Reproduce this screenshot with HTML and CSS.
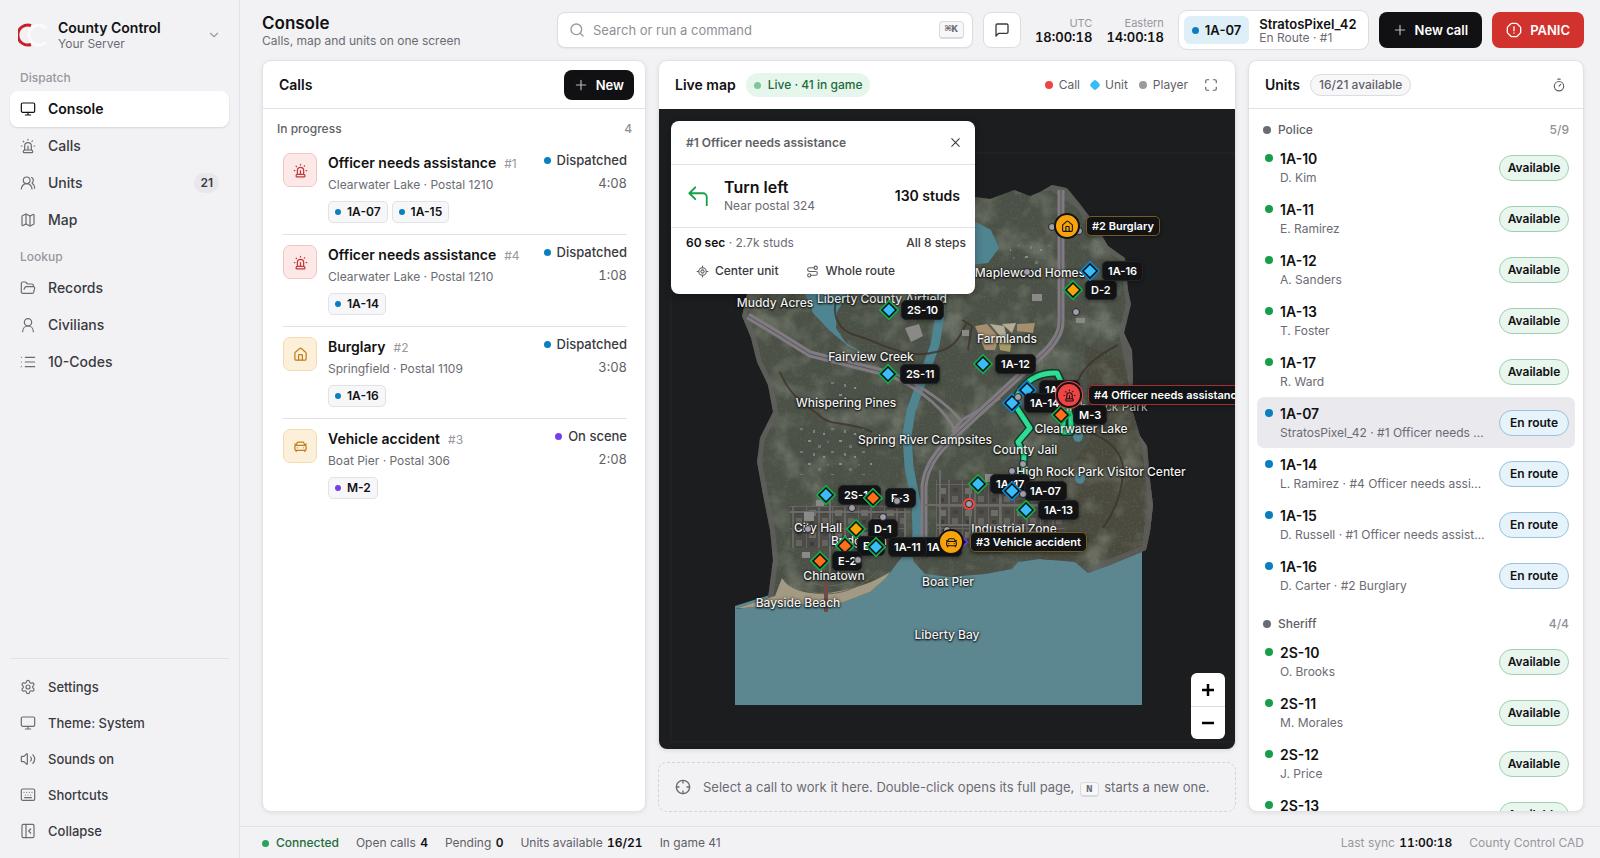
FILE: index.html
```html
<!DOCTYPE html>
<html lang="en">
<head>
    <meta charset="UTF-8">
    <meta name="viewport" content="width=device-width, initial-scale=1.0">
    <title>Console - County Control</title>
    <link rel="stylesheet" href="styles.css">
</head>
<body>
    <!-- Icon sprite -->
    <svg class="sprite" aria-hidden="true">
        <symbol id="i-monitor" viewBox="0 0 24 24"><rect x="2" y="3" width="20" height="14" rx="2"/><path d="M8 21h8M12 17v4"/></symbol>
        <symbol id="i-siren" viewBox="0 0 24 24"><path d="M7 18v-6a5 5 0 1 1 10 0v6"/><path d="M5 21a1 1 0 0 0 1 1h12a1 1 0 0 0 1-1v-1a2 2 0 0 0-2-2H7a2 2 0 0 0-2 2z"/><path d="M21 12h1M18.5 4.5 18 5M2 12h1M12 2v1M4.929 4.929l.707.707M12 12v6"/></symbol>
        <symbol id="i-users" viewBox="0 0 24 24"><path d="M18 21a8 8 0 0 0-16 0"/><circle cx="10" cy="8" r="5"/><path d="M22 20c0-3.370-2-6.500-4-8a5 5 0 0 0-.450-8.300"/></symbol>
        <symbol id="i-map" viewBox="0 0 24 24"><path d="M14.106 5.553a2 2 0 0 0 1.788 0l3.659-1.830A1 1 0 0 1 21 4.619v12.764a1 1 0 0 1-.553.894l-4.553 2.277a2 2 0 0 1-1.788 0l-4.212-2.106a2 2 0 0 0-1.788 0l-3.659 1.830A1 1 0 0 1 3 19.381V6.618a1 1 0 0 1 .553-.894l4.553-2.277a2 2 0 0 1 1.788 0z"/><path d="M15 5.764v15M9 3.236v15"/></symbol>
        <symbol id="i-folder" viewBox="0 0 24 24"><path d="m6 14 1.500-2.900A2 2 0 0 1 9.240 10H20a2 2 0 0 1 1.940 2.500l-1.540 6a2 2 0 0 1-1.950 1.500H4a2 2 0 0 1-2-2V5a2 2 0 0 1 2-2h3.900a2 2 0 0 1 1.690.900l.810 1.200a2 2 0 0 0 1.670.900H18a2 2 0 0 1 2 2v2"/></symbol>
        <symbol id="i-user" viewBox="0 0 24 24"><circle cx="12" cy="8" r="5.500"/><path d="M4 22c0-5 3.500-8.500 8-8.500s8 3.500 8 8.500"/></symbol>
        <symbol id="i-list" viewBox="0 0 24 24"><path d="M8 5h14M8 12h14M8 19h14M2 5h.010M2 12h.010M2 19h.010"/></symbol>
        <symbol id="i-gear" viewBox="0 0 24 24"><path d="M9.671 4.136a2.340 2.340 0 0 1 4.659 0 2.340 2.340 0 0 0 3.319 1.915 2.340 2.340 0 0 1 2.330 4.033 2.340 2.340 0 0 0 0 3.831 2.340 2.340 0 0 1-2.330 4.033 2.340 2.340 0 0 0-3.319 1.915 2.340 2.340 0 0 1-4.659 0 2.340 2.340 0 0 0-3.320-1.915 2.340 2.340 0 0 1-2.330-4.033 2.340 2.340 0 0 0 0-3.831A2.340 2.340 0 0 1 6.350 6.051a2.340 2.340 0 0 0 3.319-1.915"/><circle cx="12" cy="12" r="3"/></symbol>
        <symbol id="i-sound" viewBox="0 0 24 24"><path d="M11 4.700a.700.700 0 0 0-1.200-.500L6.400 7.600A1.400 1.400 0 0 1 5.400 8H3a1 1 0 0 0-1 1v6a1 1 0 0 0 1 1h2.400a1.400 1.400 0 0 1 1 .400l3.400 3.400a.700.700 0 0 0 1.200-.500zM16 9a5 5 0 0 1 0 6M19.400 18.400a9 9 0 0 0 0-12.700"/></symbol>
        <symbol id="i-keyboard" viewBox="0 0 24 24"><rect x="2" y="3" width="20" height="17" rx="2"/><path d="M6 8h.010M10 8h.010M14 8h.010M18 8h.010M8 12h.010M12 12h.010M16 12h.010M7 16h10"/></symbol>
        <symbol id="i-collapse" viewBox="0 0 24 24"><rect x="3" y="2" width="18" height="20" rx="2"/><path d="M9 2v20M16 9l-3 3 3 3"/></symbol>
        <symbol id="i-chevron" viewBox="0 0 24 24"><path d="m6 9 6 6 6-6"/></symbol>
        <symbol id="i-search" viewBox="0 0 24 24"><circle cx="11" cy="11" r="8"/><path d="m21 21-4.300-4.300"/></symbol>
        <symbol id="i-message" viewBox="0 0 24 24"><path d="M21 15a2 2 0 0 1-2 2H7l-4 4V5a2 2 0 0 1 2-2h14a2 2 0 0 1 2 2z"/></symbol>
        <symbol id="i-plus" viewBox="0 0 24 24"><path d="M4 12h16M12 4v16"/></symbol>
        <symbol id="i-alert" viewBox="0 0 24 24"><path d="M15.300 2a2 2 0 0 1 1.400.600l4.700 4.700a2 2 0 0 1 .600 1.400v6.600a2 2 0 0 1-.600 1.400l-4.700 4.700a2 2 0 0 1-1.400.600H8.700a2 2 0 0 1-1.400-.600l-4.700-4.700A2 2 0 0 1 2 15.300V8.700a2 2 0 0 1 .600-1.400l4.700-4.700A2 2 0 0 1 8.700 2zM12 7v6M12 16.500h.010"/></symbol>
        <symbol id="i-expand" viewBox="0 0 24 24"><path d="M8 3H5a2 2 0 0 0-2 2v3M21 8V5a2 2 0 0 0-2-2h-3M3 16v3a2 2 0 0 0 2 2h3M16 21h3a2 2 0 0 0 2-2v-3"/></symbol>
        <symbol id="i-timer" viewBox="0 0 24 24"><path d="M10 2h4M12 14l3-3"/><circle cx="12" cy="14" r="8"/></symbol>
        <symbol id="i-house" viewBox="0 0 24 24"><path d="M15 21v-8a1 1 0 0 0-1-1h-4a1 1 0 0 0-1 1v8"/><path d="M3 10a2 2 0 0 1 .709-1.528l7-6a2 2 0 0 1 2.582 0l7 6A2 2 0 0 1 21 10v9a2 2 0 0 1-2 2H5a2 2 0 0 1-2-2z"/></symbol>
        <symbol id="i-car" viewBox="0 0 24 24"><path d="m21 8-2 2-1.500-3.700A2 2 0 0 0 15.646 5H8.400a2 2 0 0 0-1.903 1.257L5 10 3 8M7 14h.010M17 14h.010"/><rect x="3" y="10" width="18" height="8" rx="2"/><path d="M5 18v2M19 18v2"/></symbol>
        <symbol id="i-close" viewBox="0 0 24 24"><path d="M19 5 5 19M5 5l14 14"/></symbol>
        <symbol id="i-left" viewBox="0 0 24 24"><path d="M21 22v-9a4 4 0 0 0-4-4H3M8.500 2.500 2 9l6.500 6.500"/></symbol>
        <symbol id="i-locate" viewBox="0 0 24 24"><path d="M2 12h3M19 12h3M12 2v3M12 19v3"/><circle cx="12" cy="12" r="7"/><circle cx="12" cy="12" r="3"/></symbol>
        <symbol id="i-route" viewBox="0 0 24 24"><circle cx="6" cy="19" r="3"/><path d="M9 19h8.500a3.500 3.500 0 0 0 0-7h-11a3.500 3.500 0 0 1 0-7H15"/><circle cx="18" cy="5" r="3"/></symbol>
        <symbol id="i-crosshair" viewBox="0 0 24 24"><circle cx="12" cy="12" r="10"/><path d="M22 12h-4M6 12H2M12 6V2M12 22v-4"/></symbol>
    </svg>

    <div class="app">
        <aside class="sidebar">
            <button class="brand" type="button">
                <svg class="brand-logo" viewBox="0 0 30 24" aria-hidden="true">
                    <path class="logo-red" d="M13 2.500A10 10 0 1 0 13 21.500"/>
                    <path class="logo-white" d="M28 5A10 10 0 1 0 28 19"/>
                </svg>
                <span class="brand-text"><strong>County Control</strong><small>Your Server</small></span>
                <svg class="icon chevron"><use href="#i-chevron"/></svg>
            </button>

            <nav class="nav">
                <h2 class="nav-label">Dispatch</h2>
                <a class="nav-item active" href="#console"><svg class="icon"><use href="#i-monitor"/></svg>Console</a>
                <a class="nav-item" href="#calls"><svg class="icon"><use href="#i-siren"/></svg>Calls</a>
                <a class="nav-item" href="#units"><svg class="icon"><use href="#i-users"/></svg>Units<span class="count">21</span></a>
                <a class="nav-item" href="#map"><svg class="icon"><use href="#i-map"/></svg>Map</a>
                <h2 class="nav-label">Lookup</h2>
                <a class="nav-item" href="#records"><svg class="icon"><use href="#i-folder"/></svg>Records</a>
                <a class="nav-item" href="#civilians"><svg class="icon"><use href="#i-user"/></svg>Civilians</a>
                <a class="nav-item" href="#codes"><svg class="icon"><use href="#i-list"/></svg>10-Codes</a>
            </nav>

            <div class="nav nav-bottom">
                <a class="nav-item" href="#settings"><svg class="icon"><use href="#i-gear"/></svg>Settings</a>
                <button class="nav-item" type="button"><svg class="icon"><use href="#i-monitor"/></svg>Theme: System</button>
                <button class="nav-item" type="button"><svg class="icon"><use href="#i-sound"/></svg>Sounds on</button>
                <button class="nav-item" type="button"><svg class="icon"><use href="#i-keyboard"/></svg>Shortcuts</button>
                <button class="nav-item" type="button"><svg class="icon"><use href="#i-collapse"/></svg>Collapse</button>
            </div>
        </aside>

        <div class="page">
            <header class="topbar">
                <div class="heading">
                    <h1>Console</h1>
                    <p>Calls, map and units on one screen</p>
                </div>
                <label class="search">
                    <svg class="icon"><use href="#i-search"/></svg>
                    <input type="text" placeholder="Search or run a command" aria-label="Search or run a command">
                    <kbd>⌘K</kbd>
                </label>
                <button class="btn btn-icon" type="button" aria-label="Messages"><svg class="icon"><use href="#i-message"/></svg></button>
                <div class="clocks">
                    <div class="clock"><span>UTC</span><time>18:00:18</time></div>
                    <div class="clock"><span>Eastern</span><time>14:00:18</time></div>
                </div>
                <button class="me" type="button">
                    <span class="me-unit"><i class="dot blue"></i>1A-07</span>
                    <span class="me-text"><strong>StratosPixel_42</strong><small>En Route · #1</small></span>
                </button>
                <button class="btn btn-dark" type="button"><svg class="icon"><use href="#i-plus"/></svg>New call</button>
                <button class="btn btn-panic" type="button"><svg class="icon"><use href="#i-alert"/></svg>PANIC</button>
            </header>

            <main class="board">
                <section class="card">
                    <div class="card-head">
                        <h2>Calls</h2>
                        <button class="btn btn-dark btn-small" type="button"><svg class="icon"><use href="#i-plus"/></svg>New</button>
                    </div>
                    <div class="group-head"><h3>In progress</h3><span>4</span></div>
                    <ul class="calls" id="callsList"></ul>
                </section>

                <div class="center">
                    <section class="card map-card">
                        <div class="card-head">
                            <h2>Live map</h2>
                            <span class="live"><i class="dot"></i>Live · 41 in game</span>
                            <div class="legend">
                                <span><i class="dot red"></i>Call</span>
                                <span><i class="gem"></i>Unit</span>
                                <span><i class="dot grey"></i>Player</span>
                            </div>
                            <button class="plain" type="button" aria-label="Full screen"><svg class="icon"><use href="#i-expand"/></svg></button>
                        </div>
                        <div class="map">
                            <div class="world" id="world">
                                <svg class="terrain" viewBox="659 109 576 640" aria-hidden="true">
                                    <defs>
                                        <filter id="grain" x="0" y="0" width="100%" height="100%">
                                            <feTurbulence type="fractalNoise" baseFrequency="0.5" numOctaves="2" seed="4" result="n"/>
                                            <feColorMatrix in="n" type="matrix" values="0 0 0 0 0.10  0 0 0 0 0.12  0 0 0 0 0.09  3 0 0 0 -1.65"/>
                                            <feComposite in2="SourceGraphic" operator="in"/>
                                        </filter>
                                        <filter id="patches" x="0" y="0" width="100%" height="100%">
                                            <feTurbulence type="fractalNoise" baseFrequency="0.035" numOctaves="4" seed="9" result="n"/>
                                            <feColorMatrix in="n" type="matrix" values="0 0 0 0 0.40  0 0 0 0 0.43  0 0 0 0 0.36  0 3 0 0 -1.4"/>
                                            <feComposite in2="SourceGraphic" operator="in"/>
                                        </filter>
                                        <pattern id="blocks" width="26" height="22" patternUnits="userSpaceOnUse">
                                            <rect width="26" height="22" fill="#4c4a47"/>
                                            <path d="M0 0h26M0 0v22M13 0v22" stroke="#6c6865" stroke-width="2"/>
                                            <rect x="3" y="4" width="7" height="6" fill="#77736f"/>
                                            <rect x="16" y="12" width="6" height="6" fill="#6a6663"/>
                                            <rect x="4" y="14" width="4" height="4" fill="#3a3936"/>
                                            <rect x="17" y="4" width="5" height="4" fill="#3f3e3b"/>
                                        </pattern>
                                        <pattern id="houses" width="31" height="23" patternUnits="userSpaceOnUse">
                                            <rect x="2" y="3" width="3" height="2" fill="#8a8a86"/>
                                            <rect x="12" y="8" width="3" height="3" fill="#6f746c"/>
                                            <rect x="21" y="4" width="2" height="2" fill="#5c6f78"/>
                                            <rect x="7" y="16" width="2" height="3" fill="#7d7f7a"/>
                                            <rect x="25" y="14" width="3" height="2" fill="#74777a"/>
                                            <rect x="17" y="19" width="2" height="2" fill="#8a8a86"/>
                                        </pattern>
                                        <clipPath id="landClip"><use href="#land"/></clipPath>
                                    </defs>
                                    <path class="grid-line" d="M1300 153H671V742h630"/>
                                    <path class="sea" d="M735 606 880 560 950 548H1142V705H735z"/>
                                    <path id="land" class="land" d="M747 294 780 250 850 210 930 200 975 197 990 199 1014 190 1030 196 1040 192 1052 185 1067 188 1080 204 1095 224 1108 246 1125 258 1128 290 1131 304 1124 333 1132 350 1133 380 1130 402 1140 436 1147 446 1150 480 1153 505 1150 532 1146 550 1110 565 1088 573 1075 562 1040 559 1018 562 1012 569 985 574 950 577 925 574 914 562 910 548 898 562 886 578 870 592 838 604 780 604 735 609 768 598 773 560 770 530 764 500 757 462 760 438 773 412 768 385 757 362 751 338 742 316z"/>
                                    <g clip-path="url(#landClip)">
                                        <path class="park" d="M1085 345 1150 370 1160 560 1040 560 1060 480 1090 440z"/>
                                        <rect x="735" y="185" width="425" height="425" filter="url(#patches)" opacity=".35"/>
                                        <rect x="735" y="185" width="425" height="425" filter="url(#grain)"/>
                                        <path fill="url(#houses)" d="M800 425h72v50h-72zM1010 245h40v20h-40zM830 380h26v18h-26z"/>
                                        <path fill="url(#blocks)" opacity=".8" d="M790 506h116v42H790zM936 480h78v62h-78zM1014 500h50v38h-50z"/>
                                        <path class="coast" d="M747 294 742 316 751 338 757 362 768 385 773 412 760 438 757 462 764 500 770 530 773 560 768 600M1014 190 1052 185 1080 204 1108 246 1125 258 1131 304 1124 333 1133 380 1147 446 1153 505 1146 550 1088 573"/>
                                        <path class="beach" d="M782 578c8 14 30 18 52 14 24-4 40-10 56-20l-14 24-50 12H735l40-12z"/>
                                        <path class="water" d="M800 280 813 313 830 331 848 346 868 356 846 343 836 328 837 312 846 296 850 280zM960 225 976 222 991 230 999 248 988 263 960 266z"/>
                                        <path class="river" d="M940 285v30l-5 30-14 38-10 28-4 24 2 32 7 36 1 30-3 24"/>
                                        <ellipse class="water" cx="1078" cy="436" rx="5" ry="6"/>
                                        <ellipse class="water" cx="1080" cy="478" rx="5" ry="6"/>
                                        <path class="dirt" d="M836 300c-4 18 4 32 22 36 26 8 48 24 78 16 20-4 24-16 30-28M780 372c8 20 20 30 38 42 12 14 30 6 54 18M1118 345c-16 8-34 20-40 36M1085 430c20 8 40 20 38 44s-10 40-20 54M962 320l10 6-4 24"/>
                                        <path class="farm-a" d="m975 326 12-2 12 14-4 12h-10zM1017 324l18-1-2 10-16-2z"/>
                                        <path class="farm-b" d="m990 324 14 2 4 16-8-6zM1002 324l14-1-4 10z"/>
                                        <path class="farm-c" d="m998 338 14 2-2 12-10-2z"/>
                                        <path class="track" d="M795 570c14 20 50 22 74 0"/>
                                        <path class="track" d="M786 574c18 28 66 26 92-4"/>
                                        <g class="roads">
                                            <path class="road road-wide" d="M748 316 778 334 810 354 850 364 890 374"/>
                                            <path class="road-mark" d="M748 316 778 334 810 354 850 364 890 374"/>
                                            <path class="road road-thin" d="M888 370c34 16 60 34 74 52M890 376c34 14 56 36 66 56M1000 398 962 420 952 432"/>
                                            <path class="road road-wide" d="M1061 190V322q0 14-16 30L950 440q-24 22-26 46v58"/>
                                            <path class="road-mark" d="M1061 190V322q0 14-16 30L950 440q-24 22-26 46v58"/>
                                            <path class="road road-street" d="M924 505h116M940 470v74M970 484v60M1000 484v60M936 525h90M790 512h120M830 490v90M905 500v50"/>
                                        </g>
                                        <g class="sheds">
                                            <path d="M1032 294h10v7h-10zM905 328l14-4 4 12-12 6zM1076 318h9v5h-9zM804 512h10v9h-10zM985 474h9v8h-9zM816 500h8v6h-8zM962 330h7v6h-7zM832 538h8v6h-8zM802 552h8v6h-8z"/>
                                        </g>
                                    </g>
                                    <path class="pier" d="M826 582v30"/>
                                    <path class="route-edge" d="M1063 420v12h8v-14l-8-32-6-13q-22-1-35 15l-9 14 17 26-12 14 6 13-1 30"/>
                                    <path class="route" d="M1063 420v12h8v-14l-8-32-6-13q-22-1-35 15l-9 14 17 26-12 14 6 13-1 30"/>
                                </svg>
                            </div>

                            <div class="directions">
                                <div class="dir-head"><h3>#1 Officer needs assistance</h3><button class="plain" type="button" aria-label="Close"><svg class="icon"><use href="#i-close"/></svg></button></div>
                                <div class="dir-step">
                                    <svg class="icon turn"><use href="#i-left"/></svg>
                                    <div><strong>Turn left</strong><p>Near postal 324</p></div>
                                    <b>130 studs</b>
                                </div>
                                <div class="dir-sum"><span><b>60 sec</b> · 2.7k studs</span><button class="plain" type="button">All 8 steps</button></div>
                                <div class="dir-actions">
                                    <button class="plain" type="button"><svg class="icon"><use href="#i-locate"/></svg>Center unit</button>
                                    <button class="plain" type="button"><svg class="icon"><use href="#i-route"/></svg>Whole route</button>
                                </div>
                            </div>

                            <div class="zoom">
                                <button type="button" aria-label="Zoom in"><svg viewBox="0 0 14 14"><path d="M1 7h12M7 1v12"/></svg></button>
                                <button type="button" aria-label="Zoom out"><svg viewBox="0 0 14 14"><path d="M1 7h12"/></svg></button>
                            </div>
                        </div>
                    </section>
                    <div class="hint">
                        <svg class="icon"><use href="#i-crosshair"/></svg>
                        <p>Select a call to work it here. Double-click opens its full page, <kbd>N</kbd> starts a new one.</p>
                    </div>
                </div>

                <section class="card">
                    <div class="card-head">
                        <h2>Units</h2>
                        <span class="pill">16/21 available</span>
                        <button class="plain push" type="button" aria-label="Timers"><svg class="icon"><use href="#i-timer"/></svg></button>
                    </div>
                    <div class="units" id="unitsList"></div>
                </section>
            </main>

            <footer class="status">
                <span class="online"><i class="dot"></i>Connected</span>
                <span>Open calls <b>4</b></span>
                <span>Pending <b>0</b></span>
                <span>Units available <b>16/21</b></span>
                <span>In game 41</span>
                <span class="push faint">Last sync <b>11:00:18</b></span>
                <span class="faint">County Control CAD</span>
            </footer>
        </div>
    </div>

    <script>
        const calls = [
            { id: 1, title: 'Officer needs assistance', place: 'Clearwater Lake · Postal 1210', units: ['1A-07', '1A-15'], status: 'Dispatched', time: '4:08', icon: 'siren', tone: 'danger' },
            { id: 4, title: 'Officer needs assistance', place: 'Clearwater Lake · Postal 1210', units: ['1A-14'], status: 'Dispatched', time: '1:08', icon: 'siren', tone: 'danger' },
            { id: 2, title: 'Burglary', place: 'Springfield · Postal 1109', units: ['1A-16'], status: 'Dispatched', time: '3:08', icon: 'house', tone: 'warn' },
            { id: 3, title: 'Vehicle accident', place: 'Boat Pier · Postal 306', units: ['M-2'], status: 'On scene', time: '2:08', icon: 'car', tone: 'warn' }
        ];

        const departments = [
            { name: 'Police', count: '5/9', units: [
                ['1A-10', 'D. Kim', 'Available'],
                ['1A-11', 'E. Ramirez', 'Available'],
                ['1A-12', 'A. Sanders', 'Available'],
                ['1A-13', 'T. Foster', 'Available'],
                ['1A-17', 'R. Ward', 'Available'],
                ['1A-07', 'StratosPixel_42 · #1 Officer needs assistance', 'En route', 'selected'],
                ['1A-14', 'L. Ramirez · #4 Officer needs assistance', 'En route'],
                ['1A-15', 'D. Russell · #1 Officer needs assistance', 'En route'],
                ['1A-16', 'D. Carter · #2 Burglary', 'En route']
            ] },
            { name: 'Sheriff', count: '4/4', units: [
                ['2S-10', 'O. Brooks', 'Available'],
                ['2S-11', 'M. Morales', 'Available'],
                ['2S-12', 'J. Price', 'Available'],
                ['2S-13', 'K. Hayes', 'Available']
            ] }
        ];

        // Map positions are in world units, the view starts at this corner
        const view = { x: 659, y: 109 };

        const places = [
            ['Muddy Acres', 775, 303], ['Liberty County Airfield', 882, 299], ['Fairview Creek', 871, 357],
            ['Whispering Pines', 846, 403], ['Spring River Campsites', 925, 440], ['Farmlands', 1007, 339],
            ['Maplewood Homes', 1030, 273], ['High Rock Park', 1104, 407, 'dim'], ['Clearwater Lake', 1081, 429],
            ['County Jail', 1025, 450], ['High Rock Park Visitor Center', 1101, 472], ['Industrial Zone', 1014, 529],
            ['City Hall', 818, 528], ['Bridgeton', 859, 541], ['Chinatown', 834, 576], ['Bayside Beach', 798, 603],
            ['Boat Pier', 948, 582], ['Liberty Bay', 947, 635]
        ];

        const markers = [
            ['2S-10', 889, 310, 'police', 'free'], ['2S-11', 888, 374, 'police', 'free'], ['1A-12', 983, 364, 'police', 'free'],
            ['D-2', 1073, 290, 'dot-crew', 'free'], ['1A-16', 1090, 271, 'police', 'busy'],
            ['1A-15', 1027, 390, 'police', 'busy'], ['1A-14', 1012, 403, 'police', 'busy'], ['M-3', 1061, 415, 'fire', 'free'],
            ['1A-17', 978, 484, 'police', 'free'], ['1A-07', 1012, 491, 'police', 'busy'], ['1A-13', 1026, 510, 'police', 'free'],
            ['2S-12', 826, 495, 'police', 'free'], ['F-3', 873, 498, 'fire', 'free'], ['D-1', 856, 529, 'dot-crew', 'free'],
            ['E-1', 845, 546, 'fire', 'free'], ['1A-10', 909, 547, 'police', 'free'], ['1A-11', 876, 547, 'police', 'free'],
            ['E-2', 820, 561, 'fire', 'free'], ['M-2', 958, 542, 'fire', 'scene']
        ];

        const players = [
            [1052, 227], [1079, 231], [1027, 272], [1076, 312], [1018, 397], [1023, 464], [1012, 471], [1023, 494],
            [969, 504, 'wanted'], [852, 508], [883, 517], [897, 501], [808, 529], [858, 560], [947, 530]
        ];

        const incidents = [
            ['#2 Burglary', 1067, 226, 'house', 'warn'],
            ['#4 Officer needs assistance', 1069, 395, 'siren', 'danger'],
            ['#3 Vehicle accident', 951, 542, 'car', 'warn']
        ];

        const icon = name => `<svg class="icon"><use href="#i-${name}"/></svg>`;
        const at = (x, y) => `style="left:${x - view.x}px;top:${y - view.y}px"`;

        document.getElementById('callsList').innerHTML = calls.map(c => {
            const color = c.status === 'On scene' ? 'purple' : 'blue';
            return `<li class="call">
                <span class="call-icon ${c.tone}">${icon(c.icon)}</span>
                <div class="call-main">
                    <h4>${c.title}<span>#${c.id}</span></h4>
                    <p>${c.place}</p>
                    <div class="chips">${c.units.map(u => `<span class="chip"><i class="dot ${color}"></i>${u}</span>`).join('')}</div>
                </div>
                <div class="call-side">
                    <span class="state"><i class="dot ${color}"></i>${c.status}</span>
                    <time>${c.time}</time>
                </div>
            </li>`;
        }).join('');

        document.getElementById('unitsList').innerHTML = departments.map(d => `
            <div class="group-head"><h3><i class="dot slate"></i>${d.name}</h3><span>${d.count}</span></div>
            ${d.units.map(([name, note, status, selected]) => `
                <div class="unit ${selected || ''}">
                    <i class="dot ${status === 'Available' ? 'green' : 'blue'}"></i>
                    <div class="unit-main"><h4>${name}</h4><p>${note}</p></div>
                    <button class="unit-status ${status === 'Available' ? 'is-free' : 'is-busy'}" type="button">${status}</button>
                </div>
            `).join('')}
        `).join('');

        document.getElementById('world').insertAdjacentHTML('beforeend',
            places.map(([name, x, y, dim]) => `<span class="place ${dim || ''}" ${at(x, y)}>${name}</span>`).join('') +
            markers.map(([name, x, y, kind, state]) => `
                <div class="marker" ${at(x, y)}>
                    <svg class="diamond ${kind} ${state}" viewBox="-11 -11 22 22"><path class="ring" d="M0-10 10 0 0 10-10 0z"/><path class="gap" d="M0-8 8 0 0 8-8 0z"/><path class="core" d="M0-6 6 0 0 6-6 0z"/></svg>
                    <span class="tag">${name}</span>
                </div>`).join('') +
            players.map(([x, y, wanted]) => `<i class="player ${wanted || ''}" ${at(x, y)}></i>`).join('') +
            incidents.map(([name, x, y, glyph, tone]) => `
                <div class="marker incident ${tone}" ${at(x, y)}>
                    <span class="bubble">${icon(glyph)}</span>
                    <span class="tag">${name}</span>
                </div>`).join('')
        );
    </script>
</body>
</html>
```
FILE: styles.css
```css
* {
    box-sizing: border-box;
    margin: 0;
    padding: 0;
}
body {
    font-family: Inter, "Liberation Sans", sans-serif;
    font-size: 13px;
    line-height: 18px;
    color: #111113;
    background-color: #f2f2f5;
}
button, input {
    font: inherit;
    color: inherit;
    background: none;
    border: none;
}
button { cursor: pointer; }
a { color: inherit; text-decoration: none; }
ul { list-style: none; }
h1, h2, h3, h4, b, strong { font-weight: 600; }
.sprite { display: none; }
.icon {
    width: 16px;
    height: 16px;
    flex: none;
    fill: none;
    stroke: currentColor;
    stroke-width: 2;
    stroke-linecap: round;
    stroke-linejoin: round;
}
.push { margin-left: auto; }
.dot {
    display: inline-block;
    width: 7px;
    height: 7px;
    flex: none;
    border-radius: 50%;
    background-color: #9a9a9f;
}
.dot.blue { background-color: #0a7fc0; }
.dot.green { background-color: #169f4a; }
.dot.purple { background-color: #7a3ee8; }
.dot.red { background-color: #ef4444; }
.dot.slate { background-color: #6b6b73; }

.app {
    display: grid;
    grid-template-columns: 240px minmax(0, 1fr);
    height: 100vh;
}

/* Sidebar */
.sidebar {
    display: flex;
    flex-direction: column;
    padding: 10px 10px 9px;
    border-right: 1px solid #e2e2e6;
}
.brand {
    display: flex;
    align-items: center;
    gap: 10px;
    height: 50px;
    padding: 0 8px;
    text-align: left;
}
.brand-logo { width: 30px; height: 24px; fill: none; stroke-width: 3; }
.logo-red { stroke: #c91f2b; }
.logo-white { stroke: #fafafb; }
.brand-text { flex: 1; }
.brand-text strong { display: block; font-size: 14px; line-height: 17px; }
.brand-text small { display: block; font-size: 12px; line-height: 15px; color: #6b6b73; }
.chevron { width: 14px; height: 14px; color: #9a9aa1; }
.nav { display: flex; flex-direction: column; gap: 1px; }
.nav-label {
    padding: 9px 10px 3px;
    font-size: 12px;
    font-weight: 500;
    color: #97979e;
}
.nav-item {
    display: flex;
    align-items: center;
    gap: 12px;
    height: 36px;
    padding: 0 10px;
    border-radius: 8px;
    font-size: 14px;
    font-weight: 500;
    color: #3a3a41;
}
.nav-item .icon { color: #6b6b73; stroke-width: 1.8; }
.nav-item.active {
    background-color: #fff;
    font-weight: 600;
    color: #111113;
    box-shadow: 0 1px 2px rgba(0,0,0,0.12);
}
.nav-item.active .icon { color: #111113; }
.count {
    margin-left: auto;
    padding: 1px 6px;
    border-radius: 10px;
    background-color: #e8e8ec;
    font-size: 12px;
    font-weight: 600;
}
.nav-bottom {
    gap: 0;
    margin-top: auto;
    padding-top: 10px;
    border-top: 1px solid #e2e2e6;
}
.nav-bottom .nav-item { font-size: 13px; }

/* Top bar */
.page {
    display: grid;
    grid-template-rows: 60px minmax(0, 1fr) 32px;
    min-width: 0;
    height: 100vh;
}
.topbar {
    display: flex;
    align-items: center;
    gap: 10px;
    padding: 0 16px 0 22px;
}
.heading { flex: 1; }
.heading h1 { font-size: 17px; line-height: 20px; }
.heading p { font-size: 12px; line-height: 15px; color: #6b6b73; }
.search {
    display: flex;
    align-items: center;
    gap: 8px;
    width: 416px;
    height: 36px;
    padding: 0 8px 0 11px;
    background-color: #fff;
    border: 1px solid #dcdce1;
    border-radius: 8px;
    box-shadow: 0 1px 2px rgba(0,0,0,0.05);
}
.search .icon { color: #97979e; }
.search input { flex: 1; min-width: 0; font-size: 13px; outline: none; }
.search input::placeholder { color: #8f8f96; }
kbd {
    padding: 0 5px;
    border: 1px solid #d9d9de;
    border-bottom-width: 2px;
    border-radius: 4px;
    background-color: #f7f7f9;
    font-family: "Liberation Mono", monospace;
    font-size: 11px;
    line-height: 15px;
    font-weight: 700;
    color: #6b6b73;
}
.btn {
    display: flex;
    align-items: center;
    justify-content: center;
    gap: 8px;
    height: 36px;
    padding: 0 14px;
    border-radius: 8px;
    font-weight: 600;
    white-space: nowrap;
}
.btn-icon {
    width: 38px;
    padding: 0;
    background-color: #fff;
    border: 1px solid #dcdce1;
    color: #3a3a41;
}
.btn-dark { background-color: #111113; color: #fff; }
.btn-dark .icon { width: 14px; height: 14px; color: #b9b9be; }
.btn-panic { background-color: #d2322d; color: #fff; }
.btn-small { height: 30px; padding: 0 10px; margin-left: auto; }
.clocks { display: flex; gap: 14px; padding: 0 4px; }
.clock { text-align: right; }
.clock span { display: block; font-size: 11px; line-height: 14px; color: #97979e; }
.clock time {
    display: block;
    font-size: 13px;
    line-height: 14px;
    font-weight: 600;
    font-variant-numeric: tabular-nums;
}
.me {
    display: flex;
    align-items: center;
    gap: 10px;
    height: 40px;
    padding: 0 11px 0 5px;
    background-color: #fff;
    border: 1px solid #dcdce1;
    border-radius: 9px;
    text-align: left;
}
.me-unit {
    display: flex;
    align-items: center;
    gap: 6px;
    height: 28px;
    padding: 0 8px;
    background-color: #dfeff8;
    border-radius: 6px;
    font-weight: 600;
}
.me-text strong { display: block; font-size: 13px; line-height: 14px; }
.me-text small { display: block; font-size: 12px; line-height: 13px; color: #6b6b73; }

/* Board */
.board {
    display: grid;
    grid-template-columns: 384fr 578fr 336fr;
    gap: 12px;
    min-height: 0;
    padding: 0 16px 14px 22px;
}
.card {
    display: flex;
    flex-direction: column;
    min-width: 0;
    min-height: 0;
    overflow: hidden;
    background-color: #fff;
    border: 1px solid #e2e2e6;
    border-radius: 9px;
    box-shadow: 0 1px 4px rgba(0,0,0,0.08);
}
.card-head {
    display: flex;
    align-items: center;
    flex: none;
    gap: 10px;
    height: 48px;
    padding: 0 11px 0 16px;
    border-bottom: 1px solid #e2e2e6;
}
.card-head h2 { font-size: 14px; }
.card-head .plain { padding: 0 6px; }
.card-head .plain .icon { display: block; width: 14px; height: 14px; }
.plain { color: #5f5f67; }
.pill {
    padding: 1px 8px;
    border: 1px solid #dcdce1;
    border-radius: 11px;
    background-color: #f7f7f9;
    font-size: 12px;
    font-weight: 500;
    color: #5f5f67;
}
.group-head {
    display: flex;
    align-items: center;
    justify-content: space-between;
    color: #8f8f96;
    font-size: 12px;
    font-weight: 500;
}
.group-head h3 {
    display: flex;
    align-items: center;
    gap: 7px;
    font-weight: 500;
    font-size: 12px;
    color: #5f5f67;
}
.card > .group-head { padding: 11px 13px 0 14px; }

.calls { padding: 5px 18px 0 20px; }
.call {
    display: flex;
    gap: 11px;
    padding: 10px 0 11px;
    border-bottom: 1px solid #e2e2e6;
}
.call:last-child { border-bottom: none; }
.call-icon {
    display: flex;
    align-items: center;
    justify-content: center;
    width: 34px;
    height: 34px;
    border: 1px solid;
    border-radius: 7px;
}
.call-icon .icon { width: 15px; height: 15px; }
.call-icon.danger { color: #c23a3a; background-color: #fde8e8; border-color: #f5c4c4; }
.call-icon.warn { color: #c07f18; background-color: #fdf0da; border-color: #f4dcae; }
.call-main { flex: 1; min-width: 0; }
.call-main h4 { font-size: 14px; line-height: 20px; }
.call-main h4 span { margin-left: 8px; font-size: 12px; line-height: 12px; font-weight: 400; color: #97979e; }
.call-main p { margin-top: 3px; font-size: 12px; color: #6b6b73; }
.chips { display: flex; gap: 4px; margin-top: 7px; }
.chip {
    display: flex;
    align-items: center;
    gap: 6px;
    height: 22px;
    padding: 0 6px;
    border: 1px solid #e2e2e6;
    border-radius: 5px;
    background-color: #f7f7f9;
    font-size: 12px;
    font-weight: 600;
}
.chip .dot { width: 6px; height: 6px; }
.call-side {
    display: flex;
    flex-direction: column;
    align-items: flex-end;
    gap: 5px;
    margin-top: -2px;
    color: #5f5f67;
}
.state { display: flex; align-items: center; gap: 6px; font-weight: 500; color: #3a3a41; }
.call-side time { font-variant-numeric: tabular-nums; }

/* Live map */
.center {
    display: flex;
    flex-direction: column;
    gap: 12px;
    min-width: 0;
    min-height: 0;
}
.map-card { flex: 1; }
.map-card .card-head { border-bottom: none; }
.live {
    display: flex;
    align-items: center;
    gap: 7px;
    height: 24px;
    padding: 0 8px;
    border-radius: 12px;
    background-color: #e7f6ec;
    font-size: 12px;
    font-weight: 500;
    color: #1d6b3a;
}
.live .dot { background-color: #7fc79a; }
.legend {
    display: flex;
    gap: 11px;
    margin-left: auto;
    font-size: 12px;
    color: #5f5f67;
}
.legend span { display: flex; align-items: center; gap: 6px; }
.legend .dot { width: 8px; height: 8px; }
.gem { width: 8px; height: 8px; border-radius: 2px; background-color: #38bdf8; transform: rotate(45deg); }
.map {
    position: relative;
    flex: 1;
    overflow: hidden;
    background-color: #1c1d1f;
}
.world { position: absolute; inset: 0; }
.terrain { display: block; width: 576px; height: 640px; }
.grid-line { fill: none; stroke: #26272a; }
.sea { fill: #5c8791; }
.land { fill: #4b5146; }
.park { fill: #4a4a3f; }
.coast { fill: none; stroke: #62605f; stroke-width: 10; stroke-linejoin: round; opacity: .7; }
.beach { fill: #a29a83; }
.water { fill: #4f8491; }
.river { fill: none; stroke: #4f8491; stroke-width: 9; stroke-linejoin: round; }
.dirt { fill: none; stroke: #3d3528; stroke-width: 2; opacity: .8; }
.track { fill: none; stroke: #6a665c; stroke-width: 1; }
.farm-a { fill: #a68e70; }
.farm-b { fill: #b3ac95; }
.farm-c { fill: #a59a68; }
.road { fill: none; stroke: #7f7b80; }
.road-wide { stroke-width: 7; }
.road-thin { stroke-width: 3; }
.road-street { stroke: #6d6a6a; stroke-width: 2; }
.road-mark { fill: none; stroke: #57555a; }
.sheds { fill: #8b8987; }
.pier { stroke: #6b4c46; stroke-width: 4; }
.route, .route-edge { fill: none; stroke-linejoin: round; }
.route { stroke: #2edc93; stroke-width: 5; }
.route-edge { stroke: #123b2b; stroke-width: 8; }
.place {
    position: absolute;
    transform: translate(-50%, -50%);
    white-space: nowrap;
    font-size: 12px;
    font-weight: 500;
    color: #f1f1f1;
    text-shadow: 0 1px 2px #000, 0 0 3px #000;
}
.place.dim { opacity: .6; }
.marker { position: absolute; width: 0; height: 0; }
.diamond {
    position: absolute;
    left: -11px;
    top: -11px;
    width: 22px;
    height: 22px;
}
.ring { stroke-width: 1; stroke-linejoin: round; }
.free .ring { fill: #16a34a; stroke: #16a34a; }
.busy .ring { fill: #0f7fc4; stroke: #0f7fc4; }
.scene .ring { fill: #6d3be0; stroke: #6d3be0; }
.gap { fill: #0b0c0e; }
.police .core { fill: #38bdf8; }
.fire .core { fill: #ff6f1a; }
.dot-crew .core { fill: #f9a30b; }
.tag {
    position: absolute;
    left: 12px;
    top: -10px;
    height: 20px;
    padding: 0 5px;
    border: 1px solid #222326;
    border-radius: 5px;
    background-color: #121315;
    color: #fff;
    font-size: 11px;
    font-weight: 600;
    line-height: 18px;
    white-space: nowrap;
    box-shadow: 0 1px 4px rgba(0,0,0,0.4);
}
.player {
    position: absolute;
    width: 8px;
    height: 8px;
    margin: -4px 0 0 -4px;
    border: 1px solid #222326;
    border-radius: 50%;
    background-color: #a09da8;
}
.player.wanted { box-shadow: 0 0 0 2px #ef4444; }
.incident .bubble {
    position: absolute;
    left: -13px;
    top: -13px;
    display: flex;
    align-items: center;
    justify-content: center;
    width: 26px;
    height: 26px;
    border: 2px solid #121315;
    border-radius: 50%;
    background-color: #f9a30b;
    color: #121315;
}
.incident .icon { width: 13px; height: 13px; }
.incident .tag { left: 19px; border-color: #7a5a1c; }
.incident.danger .bubble { background-color: #ef4444; box-shadow: 0 0 0 1px #ef4444; }
.incident.danger .tag { border-color: #a32f34; }

.directions {
    position: absolute;
    left: 12px;
    top: 12px;
    width: 304px;
    background-color: #fff;
    border-radius: 8px;
    box-shadow: 0 2px 8px rgba(0,0,0,0.3);
}
.dir-head {
    display: flex;
    align-items: center;
    justify-content: space-between;
    height: 44px;
    padding: 0 13px 0 15px;
    border-bottom: 1px solid #e2e2e6;
}
.dir-head h3 { font-size: 12px; font-weight: 600; color: #5f5f67; }
.dir-head .icon { display: block; width: 13px; height: 13px; }
.dir-step {
    display: flex;
    align-items: center;
    gap: 13px;
    height: 63px;
    padding: 0 15px;
    border-bottom: 1px solid #e2e2e6;
}
.turn { width: 25px; height: 22px; color: #169f4a; }
.dir-step strong { display: block; font-size: 16px; line-height: 20px; }
.dir-step p { color: #6b6b73; font-size: 12px; }
.dir-step b { margin-left: auto; font-size: 14px; }
.dir-sum {
    display: flex;
    justify-content: space-between;
    padding: 6px 9px 0 15px;
    font-size: 12px;
    color: #6b6b73;
}
.dir-sum b { color: #111113; }
.directions .plain { font-weight: 500; font-size: 12px; color: #3a3a41; }
.dir-sum .plain { line-height: 18px; }
.dir-actions { display: flex; gap: 28px; padding: 10px 25px 14px; }
.dir-actions .plain { display: flex; align-items: center; gap: 6px; line-height: 18px; }
.dir-actions .icon { width: 13px; height: 13px; color: #5f5f67; }
.zoom {
    position: absolute;
    right: 10px;
    bottom: 10px;
    width: 34px;
    border-radius: 6px;
    background-color: #fff;
    overflow: hidden;
}
.zoom button { display: flex; align-items: center; justify-content: center; width: 34px; height: 33px; }
.zoom button + button { border-top: 1px solid #dcdce1; }
.zoom svg { width: 14px; height: 14px; stroke: #000; stroke-width: 2.5; }
.hint {
    display: flex;
    align-items: center;
    gap: 12px;
    height: 50px;
    padding: 0 16px;
    border: 1px dashed #d3d3d8;
    border-radius: 9px;
    color: #6b6b73;
}
.hint p { white-space: nowrap; }
.hint kbd { margin: 0 2px; }

/* Units */
.units { flex: 1; min-height: 0; padding: 8px; overflow: hidden; }
.units .group-head { height: 25px; padding: 0 6px; }
.unit + .group-head { margin-top: 10px; }
.units .dot { width: 8px; height: 8px; }
.unit {
    display: flex;
    align-items: center;
    gap: 7px;
    height: 51px;
    padding: 0 6px 0 8px;
    border-radius: 7px;
}
.unit.selected { background-color: #e9e9ee; }
.unit > .dot { align-self: flex-start; margin-top: 12px; }
.unit-main { flex: 1; min-width: 0; }
.unit-main h4 { font-size: 14px; line-height: 20px; }
.unit-main p {
    color: #6b6b73;
    overflow: hidden;
    text-overflow: ellipsis;
    white-space: nowrap;
    font-size: 12px;
}
.unit-status {
    width: 70px;
    height: 26px;
    margin-left: 6px;
    border: 1px solid;
    border-radius: 13px;
    font-size: 12px;
    font-weight: 600;
}
.is-free { background-color: #e8f6ed; border-color: #9fcfb2; }
.is-busy { background-color: #e6f3fb; border-color: #97c1dc; }

/* Status bar */
.status {
    display: flex;
    align-items: center;
    gap: 17px;
    padding: 0 16px 0 22px;
    border-top: 1px solid #e2e2e6;
    font-size: 12px;
    color: #5f5f67;
}
.status b { margin-left: 1px; color: #111113; font-variant-numeric: tabular-nums; }
.status .dot { margin-right: 7px; background-color: #2aa35a; }
.online { color: #1d6b3a; font-weight: 500; }
.faint { color: #97979e; }
```
